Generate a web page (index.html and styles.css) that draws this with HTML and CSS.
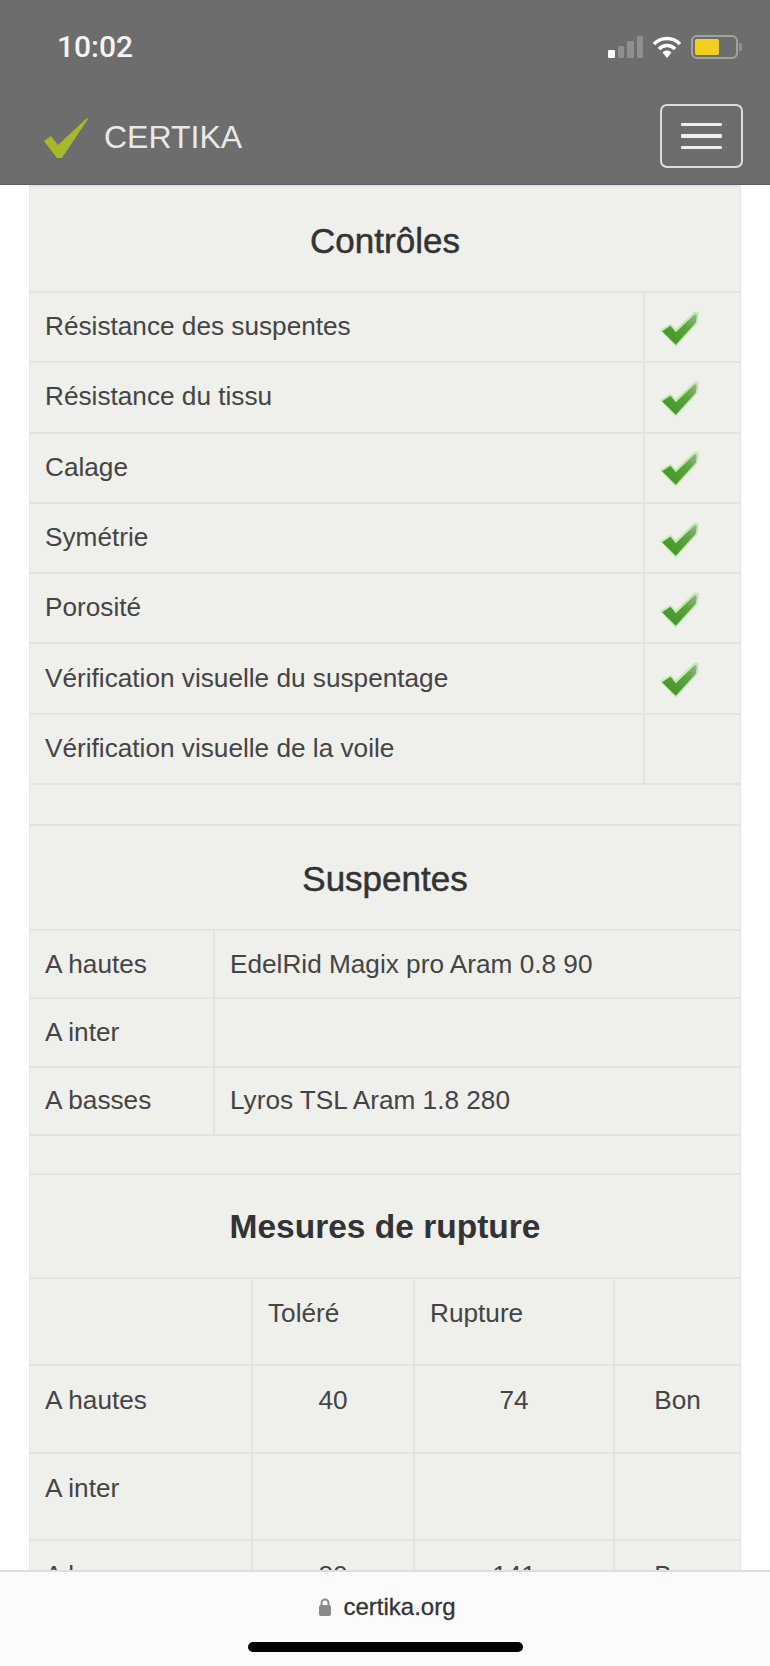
FILE: index.html
```html
<!DOCTYPE html>
<html lang="fr">
<head>
    <meta charset="UTF-8">
    <meta name="viewport" content="width=device-width, initial-scale=1.0">
    <title>Certika</title>
    <link rel="stylesheet" href="styles.css">
</head>
<body>
    <svg class="defs" width="0" height="0">
        <defs>
            <linearGradient id="checkGreen" x1="0" y1="1" x2="1" y2="0">
                <stop offset="0" stop-color="#3f8f25"/>
                <stop offset="0.65" stop-color="#5aa53c"/>
                <stop offset="1" stop-color="#9fae98"/>
            </linearGradient>
            <symbol id="check" viewBox="0 0 38 35">
                <path d="M0 19 L10 13 L15 18 L33 1 L37 2 L36 12 L15 35 Z" fill="#c4eab2"/>
                <path d="M2 20 L10 15 L15 21 L33 4 L35 5 L34 12 L15 33 Z" fill="url(#checkGreen)"/>
            </symbol>
        </defs>
    </svg>

    <div class="page">
        <header class="topbar">
            <div class="status">
                <span class="time">10:02</span>
                <div class="status-icons">
                    <div class="signal">
                        <i class="bar bar1"></i>
                        <i class="bar bar2"></i>
                        <i class="bar bar3"></i>
                        <i class="bar bar4"></i>
                    </div>
                    <svg class="wifi" width="30" height="22" viewBox="0 0 30 22">
                        <path d="M2 8 A18 18 0 0 1 28 8" fill="none" stroke="#fff" stroke-width="3.500"/>
                        <path d="M7 13 A11 11 0 0 1 23 13" fill="none" stroke="#fff" stroke-width="3.500"/>
                        <path d="M15 22 L10.500 16.500 A6 6 0 0 1 19.500 16.500 Z" fill="#fff"/>
                    </svg>
                    <div class="battery">
                        <div class="battery-level"></div>
                    </div>
                </div>
            </div>
            <nav class="navbar">
                <a class="brand" href="#">
                    <svg width="46" height="42" viewBox="0 0 46 42">
                        <path d="M1 24 L8 19 L15 28 L44 1 L45 2 L19 41 L14 41 Z" fill="#a9b72b"/>
                    </svg>
                    <span>CERTIKA</span>
                </a>
                <button class="menu-btn" type="button">
                    <i></i><i></i><i></i>
                </button>
            </nav>
        </header>

        <main class="content">
            <table class="data controles">
                <colgroup>
                    <col class="label"><col>
                </colgroup>
                <tr><th colspan="2">Contrôles</th></tr>
                <tr><td>Résistance des suspentes</td><td class="ok"><svg class="tick"><use href="#check"/></svg></td></tr>
                <tr><td>Résistance du tissu</td><td class="ok"><svg class="tick"><use href="#check"/></svg></td></tr>
                <tr><td>Calage</td><td class="ok"><svg class="tick"><use href="#check"/></svg></td></tr>
                <tr><td>Symétrie</td><td class="ok"><svg class="tick"><use href="#check"/></svg></td></tr>
                <tr><td>Porosité</td><td class="ok"><svg class="tick"><use href="#check"/></svg></td></tr>
                <tr><td>Vérification visuelle du suspentage</td><td class="ok"><svg class="tick"><use href="#check"/></svg></td></tr>
                <tr><td>Vérification visuelle de la voile</td><td class="ok"></td></tr>
            </table>

            <table class="data suspentes">
                <colgroup>
                    <col class="label"><col>
                </colgroup>
                <tr><th colspan="2">Suspentes</th></tr>
                <tr><td>A hautes</td><td>EdelRid Magix pro Aram 0.8 90</td></tr>
                <tr><td>A inter</td><td></td></tr>
                <tr><td>A basses</td><td>Lyros TSL Aram 1.8 280</td></tr>
            </table>

            <table class="data rupture">
                <colgroup>
                    <col class="c1"><col class="c2"><col class="c3"><col>
                </colgroup>
                <tr><th colspan="4" class="bold">Mesures de rupture</th></tr>
                <tr><td></td><td>Toléré</td><td>Rupture</td><td></td></tr>
                <tr><td>A hautes</td><td class="num">40</td><td class="num">74</td><td class="num">Bon</td></tr>
                <tr><td>A inter</td><td></td><td></td><td></td></tr>
                <tr><td>A basses</td><td class="num">80</td><td class="num">141</td><td class="num">Bon</td></tr>
            </table>
        </main>

        <!-- barre Safari par-dessus le contenu -->
        <div class="safari">
            <div class="url">
                <svg width="14" height="18" viewBox="0 0 14 18">
                    <path d="M3.500 8 V5 A3.500 3.500 0 0 1 10.500 5 V8" fill="none" stroke="#8a8a8a" stroke-width="2"/>
                    <rect x="1" y="7" width="12" height="11" rx="2" fill="#8a8a8a"/>
                </svg>
                <span>certika.org</span>
            </div>
            <div class="home-bar"></div>
        </div>
    </div>
</body>
</html>
```

FILE: styles.css
```css
* {
    box-sizing: border-box;
}
html, body {
    margin: 0;
    padding: 0;
    background: #fff;
}
body {
    font-family: "Liberation Sans", Arial, sans-serif;
    color: #444;
}
.defs {
    position: absolute;
}
.page {
    position: relative;
    width: 770px;
    height: 1666px;
    overflow: hidden;
}

/* header */
.topbar {
    height: 185px;
    background: #6d6d6d;
    border-bottom: 1px solid #566068;
    padding: 0 27px 0 43px;
}
.status {
    height: 94px;
    display: flex;
    justify-content: space-between;
    align-items: flex-start;
    padding-top: 30px;
    padding-left: 14px;
}
.time {
    font-family: Roboto, sans-serif;
    font-weight: 500;
    font-size: 30px;
    line-height: 34px;
    color: #f4f4f4;
}
.status-icons {
    display: flex;
    align-items: flex-end;
    gap: 9px;
    padding-top: 5px;
    margin-right: 5px;
}
.signal {
    display: flex;
    align-items: flex-end;
    gap: 3px;
    height: 23px;
}
.bar {
    display: block;
    width: 6.500px;
    background: #8f8f8f;
    border-radius: 1px;
}
.bar1 { height: 8px; background: #fff; }
.bar2 { height: 12px; }
.bar3 { height: 17px; }
.bar4 { height: 22px; }
.battery {
    position: relative;
    width: 47px;
    height: 24px;
    border: 2px solid #a3a296;
    border-radius: 6px;
    padding: 2px;
    margin-bottom: -1px;
}
.battery::after {
    content: "";
    position: absolute;
    right: -6px;
    top: 6px;
    width: 3px;
    height: 8px;
    background: #8f8f8f;
    border-radius: 0 2px 2px 0;
}
.battery-level {
    width: 24px;
    height: 100%;
    background: #f5cf1f;
    border-radius: 2px;
}
.navbar {
    display: flex;
    justify-content: space-between;
    align-items: center;
    height: 64px;
    margin-top: 10px;
}
.brand {
    display: flex;
    align-items: center;
    gap: 15px;
    color: #e9e9e9;
    font-size: 32px;
    line-height: 40px;
    text-decoration: none;
}
.brand span {
    padding-top: 1px;
}
.brand svg {
    margin-top: 4px;
}
.menu-btn {
    display: flex;
    flex-direction: column;
    justify-content: center;
    align-items: center;
    gap: 8px;
    width: 83px;
    height: 64px;
    background: none;
    border: 2px solid #dcdcdc;
    border-radius: 7px;
    padding: 0;
}
.menu-btn i {
    display: block;
    width: 41px;
    height: 3.500px;
    background: #eee;
    border-radius: 1px;
}

/* tables */
.content {
    margin: 0 29px;
    background: #efefec;
    border-left: 1px solid #e4e4e1;
    border-right: 1px solid #e4e4e1;
    padding-bottom: 300px;
}
.data {
    width: 100%;
    border-collapse: collapse;
    table-layout: fixed;
    margin-bottom: 39px;
    font-size: 26.200px;
}
.data td, .data th {
    border: 2px solid #e3e3e0;
    padding: 0 15px 1px;
}
.data th {
    font-size: 35px;
    font-weight: normal;
    color: #333;
    text-align: center;
    -webkit-text-stroke: 0.5px #333;
    padding-top: 3px;
    padding-bottom: 0;
}
.data th.bold {
    font-size: 33.500px;
    font-weight: bold;
    -webkit-text-stroke: 0;
}
.data tr > :first-child {
    border-left: 0;
}
.data tr > :last-child {
    border-right: 0;
}
.controles th {
    height: 106px;
}
.controles td {
    height: 70.300px;
}
.controles .label {
    width: 614px;
}
.data td.ok {
    padding: 0;
}
.tick {
    display: block;
    width: 40px;
    height: 37px;
    margin: 2px 0 0 15px;
    filter: blur(0.5px);
}
.suspentes {
    margin-bottom: 37px;
}
.suspentes th {
    height: 105px;
}
.suspentes td {
    height: 68.300px;
    padding-bottom: 0;
}
.suspentes .label {
    width: 184px;
}
.rupture th {
    height: 104px;
}
.rupture td {
    height: 87.500px;
    vertical-align: top;
    padding-top: 19px;
}
.c1 { width: 222px; }
.c2 { width: 162px; }
.c3 { width: 200px; }
.data td.num {
    text-align: center;
}

/* barre du navigateur */
.safari {
    position: absolute;
    left: 0;
    right: 0;
    bottom: 0;
    height: 96px;
    background: #fbfbfb;
    border-top: 2px solid #dedede;
}
.url {
    display: flex;
    justify-content: center;
    align-items: center;
    gap: 11px;
    margin-top: 20px;
    padding-left: 4px;
    font-size: 24px;
    line-height: 30px;
    color: #333;
    -webkit-text-stroke: 0.3px #333;
}
.home-bar {
    width: 275px;
    height: 10px;
    margin: 20px auto 0;
    background: #000;
    border-radius: 5px;
}
```
